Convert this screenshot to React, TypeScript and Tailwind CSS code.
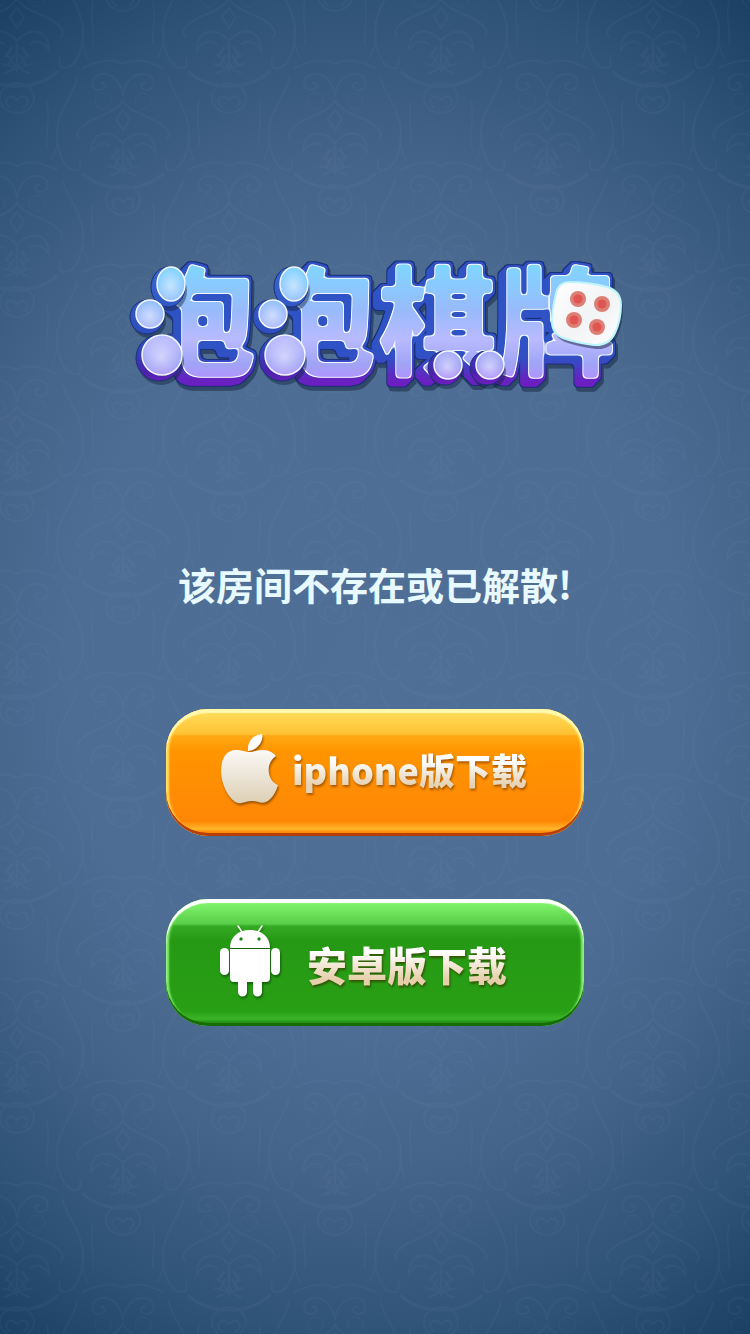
import { useId } from "react";

const EXTRUSION = [1, 3, 5, 7];
const BUBBLES = [
  { x: 44, y: 24, rx: 14, ry: 17 },
  { x: 23, y: 54, rx: 14, ry: 14 },
  { x: 35, y: 95, rx: 20, ry: 20 },
  { x: 167, y: 24, rx: 14, ry: 17 },
  { x: 146, y: 54, rx: 14, ry: 14 },
  { x: 158, y: 95, rx: 20, ry: 20 },
  { x: 321, y: 105, rx: 14, ry: 14 },
  { x: 363, y: 105, rx: 14, ry: 14 },
];
const PIPS = [
  [451, 39],
  [475, 44],
  [447, 60],
  [470, 67],
];

function Pattern() {
  const id = useId();
  return (
    <svg className="absolute inset-0 h-full w-full" aria-hidden="true">
      <defs>
        <g id={id + "m"} fill="none" stroke="#7fa3bd" strokeLinecap="round">
          <path strokeWidth="2" d="M0-58C-10-64-24-62-40-54M0-58C10-64 24-62 40-54M-46-44C-47-30-67-12-66 14C-65 36-56 48-48 48C-42 49-42 42-43 38M46-44C47-30 67-12 66 14C65 36 56 48 48 48C42 49 42 42 43 38" />
          <path strokeWidth="3" d="M-40 52Q-24 66 0 66Q24 66 40 52" />
          <path strokeWidth="1.5" d="M-76-20c4 20-2 28 0 44M76-20c-4 20 2 28 0 44M-71 38q8-16 5-32M71 38q-8-16-5-32" />
          <path strokeWidth="2" d="M0-26C-2-42-12-49-22-48c-12 2-11 17-1 16c7-1 5-9 1-7M0-26C2-42 12-49 22-48c12 2 11 17 1 16c-7-1-5-9-1-7" />
          <path strokeWidth="2" d="M0-22C-6-8-30-6-40 4c-8 7-6 10-4 13M0-22C6-8 30-6 40 4c8 7 6 10 4 13" />
          <circle cx="-20" cy="-21" r="8" />
          <circle cx="20" cy="-21" r="8" />
          <path strokeWidth="2" d="M0-12l7 9l-7 11l-7-11ZM-32 30c0-20 18-25 32-9c14-16 32-11 32 9c-5-8-12-11-19-6M-32 30c5-8 12-11 19-6" />
          <path strokeWidth="3" d="M0 24V46M-5 28l-6 8M5 28l6 8M-4 36l-4 8M4 36l4 8" />
          <path strokeWidth="2" d="M-17 78a17 15 0 1 0 34 0a17 15 0 1 0-34 0M0 80c-9-10-15 4-7 7M0 80c9-10 15 4 7 7" />
          <path strokeWidth="2" d="M106-50v-20M106-54l-9-12M106-54l9-12M106-54l-15-4M106-54l15-4M106-54l-12 5M106-54l12 5" />
        </g>
        <pattern id={id + "p"} width="212" height="204" patternUnits="userSpaceOnUse" patternTransform="translate(17 20)">
          <use href={"#" + id + "m"} x="106" y="102" />
          <use href={"#" + id + "m"} x="-106" y="102" />
          <use href={"#" + id + "m"} x="0" y="0" />
          <use href={"#" + id + "m"} x="212" y="0" />
          <use href={"#" + id + "m"} x="0" y="204" />
          <use href={"#" + id + "m"} x="212" y="204" />
        </pattern>
      </defs>
      <rect width="100%" height="100%" fill={"url(#" + id + "p)"} opacity=".06" />
    </svg>
  );
}

function Logo() {
  return (
    <svg viewBox="0 0 496 140" className="w-[496px] max-w-full overflow-visible" role="img" aria-label="泡泡棋牌">
      <defs>
        <linearGradient id="face" gradientUnits="userSpaceOnUse" x1="0" y1="5" x2="0" y2="125">
          <stop offset="0" stopColor="#7fd6ff" />
          <stop offset=".38" stopColor="#98bafb" />
          <stop offset=".62" stopColor="#b9baff" />
          <stop offset=".82" stopColor="#a0a4f6" />
          <stop offset="1" stopColor="#b88cff" />
        </linearGradient>
        <linearGradient id="depth" gradientUnits="userSpaceOnUse" x1="0" y1="8" x2="0" y2="130">
          <stop offset="0" stopColor="#3567cc" />
          <stop offset=".65" stopColor="#2d48bd" />
          <stop offset=".85" stopColor="#4a23ac" />
          <stop offset="1" stopColor="#7d1cc4" />
        </linearGradient>
        <radialGradient id="bubble" cx=".48" cy=".55" r=".55">
          <stop offset="0" stopColor="#fff" stopOpacity=".5" />
          <stop offset=".7" stopColor="#fff" stopOpacity=".15" />
          <stop offset="1" stopColor="#fff" stopOpacity="0" />
        </radialGradient>
        <linearGradient id="die" x1="0" y1="0" x2="1" y2="1">
          <stop offset="0" stopColor="#fff" />
          <stop offset=".55" stopColor="#f1f3f5" />
          <stop offset="1" stopColor="#fff" />
        </linearGradient>
        <filter id="bevel" filterUnits="userSpaceOnUse" x="-10" y="-10" width="520" height="160" colorInterpolationFilters="sRGB">
          <feGaussianBlur in="SourceGraphic" stdDeviation="2.2" result="soft" />
          <feComponentTransfer in="soft" result="round">
            <feFuncA type="linear" slope="7" intercept="-3" />
          </feComponentTransfer>
          <feFlood floodColor="#f3f8ff" result="white" />
          <feComposite in="white" in2="round" operator="in" result="rim" />
          <feMorphology in="round" operator="erode" radius="1" result="inner" />
          <feComposite in="SourceGraphic" in2="inner" operator="in" result="top" />
          <feMorphology in="round" operator="dilate" radius="2" result="wide" />
          {EXTRUSION.map((d) => (
            <feOffset key={d} in="wide" dx={1 - d} dy={d - 1} result={"step" + d} />
          ))}
          <feMerge result="solid">
            {EXTRUSION.map((d) => (
              <feMergeNode key={d} in={"step" + d} />
            ))}
          </feMerge>
          <feFlood floodColor="#2f52c4" result="blue" />
          <feFlood y="110" height="40" x="-10" width="520" floodColor="#6f1cc0" result="violet" />
          <feGaussianBlur in="violet" stdDeviation="0 9" x="-10" y="-10" width="520" height="160" result="violetSoft" />
          <feMerge result="ink">
            <feMergeNode in="blue" />
            <feMergeNode in="violetSoft" />
          </feMerge>
          <feComposite in="ink" in2="solid" operator="in" result="side" />
          <feMorphology in="solid" operator="dilate" radius="1" result="edge" />
          <feFlood floodColor="#1b2f7a" result="navy" />
          <feComposite in="navy" in2="edge" operator="in" result="line" />
          <feFlood floodColor="#12233c" floodOpacity=".5" result="dark" />
          <feOffset in="edge" dx="2" dy="4" result="shade" />
          <feComposite in="dark" in2="shade" operator="in" result="shadow" />
          <feMerge>
            <feMergeNode in="shadow" />
            <feMergeNode in="line" />
            <feMergeNode in="side" />
            <feMergeNode in="rim" />
            <feMergeNode in="top" />
          </feMerge>
        </filter>
        <mask id="drops" maskUnits="userSpaceOnUse" x="0" y="-10" width="500" height="160">
          <rect y="-10" width="500" height="160" fill="#fff" />
          <path d="M0-10H47V28L36 66L47 84V150H0ZM128-10H167V28L156 66L167 84V150H128Z" fill="#000" />
        </mask>
      </defs>
      <g filter="url(#bevel)">
        <text
          x="10"
          y="107"
          mask="url(#drops)"
          fontFamily="'Noto Sans CJK SC', sans-serif"
          fontWeight="900"
          fontSize="120"
          fill="url(#face)"
        >
          泡泡棋牌
        </text>
      </g>
      {BUBBLES.map((b) => (
        <g key={b.x}>
          <ellipse cx={b.x - 1} cy={b.y + 7} rx={b.rx + 3} ry={b.ry + 3} fill="#12233c" opacity=".45" />
          <ellipse cx={b.x - 3} cy={b.y + 3} rx={b.rx + 3} ry={b.ry + 3} fill="url(#depth)" stroke="#1b2f7a" />
          <ellipse cx={b.x} cy={b.y} rx={b.rx} ry={b.ry} fill="url(#face)" stroke="#f3f8ff" strokeWidth="1.5" />
          <ellipse cx={b.x} cy={b.y} rx={b.rx - 1} ry={b.ry - 1} fill="url(#bubble)" />
        </g>
      ))}
      <path d="M442 22Q462 22 480 27Q494 31 494 45Q494 60 488 73Q482 86 467 85Q450 83 436 78Q424 73 425 59Q426 45 429 33Q432 22 442 22Z" fill="#12233c" opacity=".5" transform="translate(2 4)" />
      <path d="M442 22Q462 22 480 27Q494 31 494 45Q494 60 488 73Q482 86 467 85Q450 83 436 78Q424 73 425 59Q426 45 429 33Q432 22 442 22Z" fill="url(#die)" stroke="#bdf5fb" strokeWidth="2" />
      {PIPS.map(([x, y]) => (
        <g key={x}>
          <circle cx={x} cy={y} r="8" fill="#dc7f76" />
          <circle cx={x} cy={y} r="4.5" fill="#e0554f" />
        </g>
      ))}
    </svg>
  );
}

function AppleIcon() {
  return (
    <svg viewBox="0 0 60 70" className="h-[70px] w-[60px] shrink-0 drop-shadow-[1px_2px_1px_rgba(90,45,0,0.6)]" aria-hidden="true">
      <defs>
        <linearGradient id="silver" x1="0" y1="0" x2="0" y2="1">
          <stop offset="0" stopColor="#fbf9f7" />
          <stop offset="1" stopColor="#ddcfb4" />
        </linearGradient>
      </defs>
      <path fill="#fff" d="M28 17C27 8 33 1 42 0C44 7 37 17 28 17Z" />
      <path fill="url(#silver)" d="M30 18C25 18 22 16 16 16C6 16 1 25 1 37C1 51 10 67 18 69C23 70 26 67 32 67C38 67 41 70 46 68C52 65 56 58 58 51C47 47 45 29 56 22C52 17 47 16 42 16C37 16 34 18 30 18Z" />
    </svg>
  );
}

function AndroidIcon() {
  return (
    <svg viewBox="0 0 62 72" className="h-[72px] w-[62px] shrink-0 drop-shadow-[1px_2px_1px_rgba(0,50,0,0.55)]" aria-hidden="true">
      <g fill="#fff">
        <path d="M11 23C11 12 19 5 31 5S51 12 51 23Z" />
        <path d="M11 24H51V53Q51 57 47 57H43V67A4.5 4.5 0 0 1 34 67V57H28V67A4.5 4.5 0 0 1 19 67V57H15Q11 57 11 53Z" />
        <rect x="1" y="23" width="9" height="27" rx="4.5" />
        <rect x="52" y="23" width="9" height="27" rx="4.5" />
      </g>
      <path d="M19 1l4 6M43 1l-4 6" stroke="#fff" strokeWidth="1.5" strokeLinecap="round" />
      <circle cx="22" cy="14" r="1.7" fill="#208719" />
      <circle cx="40" cy="14" r="1.7" fill="#208719" />
    </svg>
  );
}

export default function App() {
  return (
    <main className="relative flex min-h-screen flex-col items-center overflow-hidden bg-[radial-gradient(ellipse_96%_65%_at_50%_50%,#506f97_0%,#4d6d94_42%,#456489_58%,#305378_77%,#1a3d62_94%)] px-4 pt-[260px] pb-12 font-['Noto_Sans_CJK_SC',sans-serif]">
      <Pattern />
      <h1 className="relative flex max-w-full justify-center">
        <Logo />
      </h1>
      <p className="relative mt-[160px] text-center text-[38px] leading-[48px] font-bold text-[#e8faff]">该房间不存在或已解散!</p>
      <nav className="relative mt-[101px] flex w-full max-w-[418px] flex-col gap-[63px]">
        <a
          href="#iphone"
          className="flex h-[127px] items-center rounded-[42px] bg-[linear-gradient(180deg,#ffe061_0,#ffc233_25px,#ffa914_27px,#ff9500_42px,#ff8a05_95px,#ff8605_112px,#ffb62b_120px,#ff8a0b_123px)] pl-[54px] shadow-[inset_0_-3px_0_#b63f09,inset_0_4px_1px_#fff9ae,inset_3px_0_2px_#ffdc60,inset_-3px_0_2px_#ffdc60]"
        >
          <span className="flex items-center gap-3 pb-2">
            <AppleIcon />
            <span className="bg-gradient-to-b from-white from-35% to-[#e6d2b4] to-80% bg-clip-text text-[36px] leading-[52px] font-black whitespace-nowrap text-transparent drop-shadow-[1px_2px_1px_rgba(120,60,0,0.65)]">iphone版下载</span>
          </span>
        </a>
        <a
          href="#android"
          className="flex h-[127px] items-center rounded-[42px] bg-[linear-gradient(180deg,#87fa72_0,#58cf47_25px,#35aa24_27px,#269914_42px,#289f15_112px,#3cb42a_120px,#249313_123px)] pl-[53px] shadow-[inset_0_-3px_0_#176c07,inset_0_4px_1px_#fff,inset_3px_0_2px_#83ed70,inset_-3px_0_2px_#83ed70]"
        >
          <span className="flex items-center gap-[26px] pb-1">
            <AndroidIcon />
            <span className="bg-gradient-to-b from-white from-35% to-[#e6cfaa] to-80% bg-clip-text pt-[6px] text-[40px] leading-[56px] font-black whitespace-nowrap text-transparent drop-shadow-[1px_2px_1px_rgba(50,65,0,0.8)]">安卓版下载</span>
          </span>
        </a>
      </nav>
    </main>
  );
}
